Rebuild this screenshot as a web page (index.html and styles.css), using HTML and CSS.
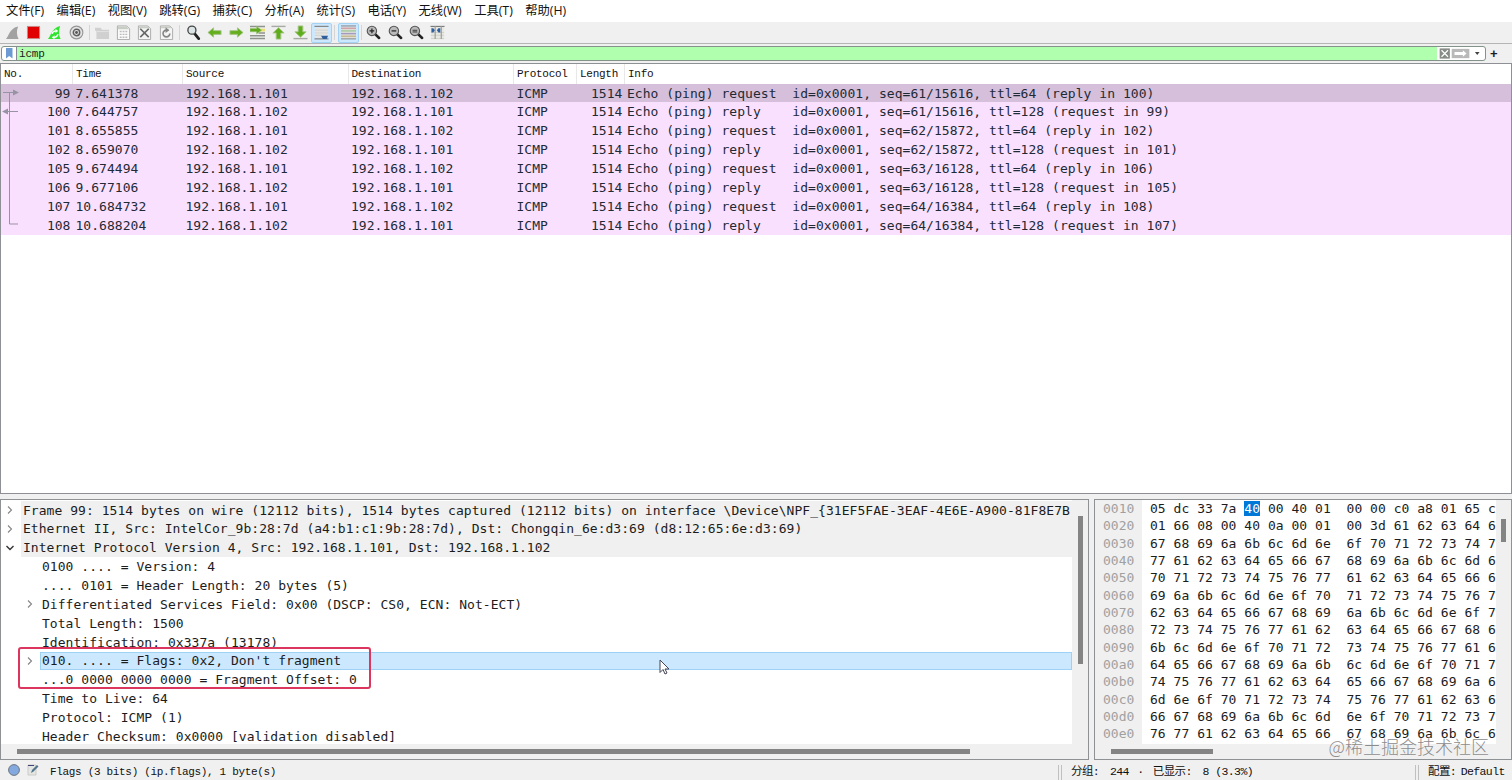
FILE: index.html
```html
<!DOCTYPE html>
<html lang="zh-CN">
<head>
<meta charset="utf-8">
<title>Wireshark</title>
<link rel="stylesheet" href="styles.css">
</head>
<body>
<div class="app">
<nav class="menu"><span>文件(F)</span><span>编辑(E)</span><span>视图(V)</span><span>跳转(G)</span><span>捕获(C)</span><span>分析(A)</span><span>统计(S)</span><span>电话(Y)</span><span>无线(W)</span><span>工具(T)</span><span>帮助(H)</span></nav>
<div class="toolbar">
<span class="tool"><svg viewBox="0 0 16 16"><path d="M1 15C4 12 5 3 14 1.500C12 6 12.500 11 14.500 15Z" fill="#a2a2a2"/></svg></span>
<span class="tool"><svg viewBox="0 0 16 16"><rect x="1.500" y="1.500" width="13" height="13" fill="#e00000" stroke="#c98b8b"/></svg></span>
<span class="tool"><svg viewBox="0 0 16 16"><path d="M1 15C4 12 5 3 14 1C12 6 12.500 11 14.500 15Z" fill="#2ee52e"/><path d="M5.500 9.500a3.500 3.500 0 0 1 4-3M11.500 9.500a3.500 3.500 0 0 1-4 3.500" fill="none" stroke="#f5fff5" stroke-width="1.600"/><path d="M9 4l3 2.500-3 2zM8 15.500l-3-2.500 3-2z" fill="#f5fff5"/></svg></span>
<span class="tool"><svg viewBox="0 0 16 16"><circle cx="8" cy="8" r="6.800" fill="#e4e4e4" stroke="#969696" stroke-width="1.200"/><circle cx="8" cy="8" r="3.400" fill="none" stroke="#606060" stroke-width="1.600"/><circle cx="8" cy="8" r="1.500" fill="#555"/></svg></span>
<i class="sep s1"></i>
<span class="tool"><svg viewBox="0 0 16 16"><path d="M0 3h6l1.500 2H15v10H1.500V6H0Z" fill="#d0d0d0"/><path d="M2 7h13" stroke="#e2e2e2"/></svg></span>
<span class="tool"><svg viewBox="0 0 16 16"><path d="M1.500 1h10l3 3v11.500h-13Z" fill="#fafafa" stroke="#aaa"/><path d="M2 1.500h9l3 3H2Z" fill="#c8cec4"/><path d="M4 7h8.500M4 10h8.500M4 13h8.500" stroke="#bbb" stroke-width="1.500" stroke-dasharray="2 1"/></svg></span>
<span class="tool"><svg viewBox="0 0 16 16"><path d="M1.500 1h10l3 3v11.500h-13Z" fill="#f5f5f5" stroke="#aaa"/><path d="M2 1.500h9l3 2H2Z" fill="#c8cec4"/><path d="M3.500 4l9 9M12.500 4l-9 9" stroke="#686868" stroke-width="1.800"/></svg></span>
<span class="tool"><svg viewBox="0 0 16 16"><path d="M1.500 1h10l3 3v11.500h-13Z" fill="#f5f5f5" stroke="#aaa"/><path d="M2 1.500h9l3 2H2Z" fill="#c8cec4"/><path d="M10 5.500H8A3.600 3.600 0 1 0 11.500 9" fill="none" stroke="#858585" stroke-width="1.700"/><path d="M7 2.500l4 3-4 3z" fill="#858585"/></svg></span>
<i class="sep s2"></i>
<span class="tool"><svg viewBox="0 0 16 16"><path d="M9 9l4.500 5.500" stroke="#222" stroke-width="3" stroke-linecap="round"/><circle cx="6.300" cy="5.500" r="4.300" fill="#dce5e5" stroke="#444" stroke-width="1.400"/></svg></span>
<span class="tool"><svg viewBox="0 0 16 16"><path d="M1 8l6-5v3h8v4H7v3Z" fill="#65ae1d" stroke="#a5c58a"/></svg></span>
<span class="tool"><svg viewBox="0 0 16 16"><path d="M15 8L9 3v3H1v4h8v3Z" fill="#65ae1d" stroke="#a5c58a"/></svg></span>
<span class="tool"><svg viewBox="0 0 16 16"><path d="M0 1.500h16M0 11.500h16M0 14.500h16M9 8.500h7" stroke="#8e938b" stroke-width="1.600"/><path d="M9 5.500h7" stroke="#e8df79" stroke-width="3"/><path d="M12.500 5.500L7 1.500v2.300H0v3.400h7v2.300Z" fill="#5fa91c" stroke="#a0c77e" stroke-width=".7"/></svg></span>
<span class="tool"><svg viewBox="0 0 16 16"><path d="M.5 1.500h15" stroke="#a8aba5" stroke-width="1.500"/><path d="M8 2.800l6 5.700h-3.500v6.500h-5V8.500H2Z" fill="#60ad1b" stroke="#a5c58a"/></svg></span>
<span class="tool"><svg viewBox="0 0 16 16"><path d="M.5 14.500h15" stroke="#a8aba5" stroke-width="1.500"/><path d="M8 13l6-5.700h-3.500V1h-5v6.300H2Z" fill="#60ad1b" stroke="#a5c58a"/></svg></span>
<span class="tool on"><svg viewBox="0 0 16 16"><path d="M.5 1.500h15M.5 14.800h15" stroke="#888" stroke-width="1.200"/><path d="M1 3h14v10.500H1Z" fill="#e6e6e2"/><path d="M1 5.500h14M1 8.500h14M1 11h7" stroke="#cfd2cf"/><path d="M7.500 11.500H15L13.500 15h-4Z" fill="#305f9d"/></svg></span>
<i class="sep"></i>
<span class="tool on"><svg viewBox="0 0 16 16"><path d="M0 2h16v12.500H0Z" fill="#deded9"/><path d="M0 1h16M0 14.800h16" stroke="#808080"/><path d="M0 3.500h16" stroke="#cfa1aa" stroke-width="1.500"/><path d="M0 6.300h16" stroke="#a3c79f" stroke-width="1.500"/><path d="M0 9.200h16" stroke="#a29ac0" stroke-width="1.500"/><path d="M0 12h16" stroke="#c6b78f" stroke-width="1.500"/></svg></span>
<i class="sep s3"></i>
<span class="tool"><svg viewBox="0 0 16 16"><path d="M10 10l4 3.800" stroke="#222" stroke-width="2.800" stroke-linecap="round"/><circle cx="6.300" cy="6.300" r="5" fill="#bababa" stroke="#555" stroke-width="1.200"/><path d="M3.800 6.300h5M6.300 3.800v5" stroke="#222" stroke-width="1.300"/></svg></span>
<span class="tool"><svg viewBox="0 0 16 16"><path d="M10 10l4 3.800" stroke="#222" stroke-width="2.800" stroke-linecap="round"/><circle cx="6.300" cy="6.300" r="5" fill="#bababa" stroke="#555" stroke-width="1.200"/><path d="M3.800 6.300h5" stroke="#222" stroke-width="1.300"/></svg></span>
<span class="tool"><svg viewBox="0 0 16 16"><path d="M10 10l4 3.800" stroke="#222" stroke-width="2.800" stroke-linecap="round"/><circle cx="6.300" cy="6.300" r="5" fill="#bababa" stroke="#555" stroke-width="1.200"/><path d="M3.800 5.600h5M3.800 7.400h5" stroke="#333"/></svg></span>
<span class="tool"><svg viewBox="0 0 16 16"><path d="M1 2h14v13H1Z" fill="#e8e8e3"/><path d="M.5 1.500h15" stroke="#777" stroke-width="1.200"/><path d="M1 14.500h14M1 8h14M1 11h14" stroke="#d0d0ca"/><path d="M5.500 1v14M12 1v14" stroke="#999" stroke-width="1.200"/><path d="M1.500 3.500h2l1.700 2.200L3.500 8h-2zM11 3.500H9L7.300 5.700 9 8h2z" fill="#305f9d"/></svg></span>
</div>
<div class="filter">
<div class="field"><svg class="mark" viewBox="0 0 14 13"><path d="M4 1h6.500v10.500L7.200 9 4 11.500Z" fill="#6b9bd2"/></svg><div class="query">icmp</div>
<svg class="actions" viewBox="0 0 48 14"><rect x="1" y="1.500" width="11" height="11" fill="#868b86"/><path d="M3 3.500l7 7M10 3.500l-7 7" stroke="#fff" stroke-width="1.300"/><rect x="14" y="2" width="19" height="10" fill="#b9b9b9"/><path d="M17 5.500h9V3.500L30 7l-4 3.500v-2h-9Z" fill="#fff"/><path d="M39 5.500h5L41.500 8.500Z" fill="#444"/></svg></div><b>+</b>
</div>
<main class="packets">
<div class="row head"><span>No.</span><span>Time</span><span>Source</span><span>Destination</span><span>Protocol</span><span>Length</span><span>Info</span></div>
<div class="row sel"><span>99</span><span>7.641378</span><span>192.168.1.101</span><span>192.168.1.102</span><span>ICMP</span><span>1514</span><span>Echo (ping) request  id=0x0001, seq=61/15616, ttl=64 (reply in 100)</span></div>
<div class="row"><span>100</span><span>7.644757</span><span>192.168.1.102</span><span>192.168.1.101</span><span>ICMP</span><span>1514</span><span>Echo (ping) reply    id=0x0001, seq=61/15616, ttl=128 (request in 99)</span></div>
<div class="row"><span>101</span><span>8.655855</span><span>192.168.1.101</span><span>192.168.1.102</span><span>ICMP</span><span>1514</span><span>Echo (ping) request  id=0x0001, seq=62/15872, ttl=64 (reply in 102)</span></div>
<div class="row"><span>102</span><span>8.659070</span><span>192.168.1.102</span><span>192.168.1.101</span><span>ICMP</span><span>1514</span><span>Echo (ping) reply    id=0x0001, seq=62/15872, ttl=128 (request in 101)</span></div>
<div class="row"><span>105</span><span>9.674494</span><span>192.168.1.101</span><span>192.168.1.102</span><span>ICMP</span><span>1514</span><span>Echo (ping) request  id=0x0001, seq=63/16128, ttl=64 (reply in 106)</span></div>
<div class="row"><span>106</span><span>9.677106</span><span>192.168.1.102</span><span>192.168.1.101</span><span>ICMP</span><span>1514</span><span>Echo (ping) reply    id=0x0001, seq=63/16128, ttl=128 (request in 105)</span></div>
<div class="row"><span>107</span><span>10.684732</span><span>192.168.1.101</span><span>192.168.1.102</span><span>ICMP</span><span>1514</span><span>Echo (ping) request  id=0x0001, seq=64/16384, ttl=64 (reply in 108)</span></div>
<div class="row"><span>108</span><span>10.688204</span><span>192.168.1.102</span><span>192.168.1.101</span><span>ICMP</span><span>1514</span><span>Echo (ping) reply    id=0x0001, seq=64/16384, ttl=128 (request in 107)</span></div>
<svg class="link" viewBox="0 0 20 152"><path d="M2 10.500h13M8.500 10.500v131.500H17M6 29.500h11" fill="none" stroke="#9693a3"/><path d="M12 7.500l6 3-6 3zM7 26.500l-6 3 6 3z" fill="#9693a3"/></svg>
</main>
<div class="lower">
<section class="details">
<div class="tree">
<div class="line top"><svg viewBox="0 0 8 8"><path d="M2 .5L5.500 4 2 7.500"/></svg><span>Frame 99: 1514 bytes on wire (12112 bits), 1514 bytes captured (12112 bits) on interface \Device\NPF_{31EF5FAE-3EAF-4E6E-A900-81F8E7B</span></div>
<div class="line top"><svg viewBox="0 0 8 8"><path d="M2 .5L5.500 4 2 7.500"/></svg><span>Ethernet II, Src: IntelCor_9b:28:7d (a4:b1:c1:9b:28:7d), Dst: Chongqin_6e:d3:69 (d8:12:65:6e:d3:69)</span></div>
<div class="line top"><svg class="open" viewBox="0 0 8 8"><path d="M.5 2L4 5.500 7.500 2"/></svg><span>Internet Protocol Version 4, Src: 192.168.1.101, Dst: 192.168.1.102</span></div>
<div class="line sub"><span>0100 .... = Version: 4</span></div>
<div class="line sub"><span>.... 0101 = Header Length: 20 bytes (5)</span></div>
<div class="line sub"><svg viewBox="0 0 8 8"><path d="M2 .5L5.500 4 2 7.500"/></svg><span>Differentiated Services Field: 0x00 (DSCP: CS0, ECN: Not-ECT)</span></div>
<div class="line sub"><span>Total Length: 1500</span></div>
<div class="line sub"><span>Identification: 0x337a (13178)</span></div>
<div class="line sub current"><svg viewBox="0 0 8 8"><path d="M2 .5L5.500 4 2 7.500"/></svg><span>010. .... = Flags: 0x2, Don't fragment</span></div>
<div class="line sub"><span>...0 0000 0000 0000 = Fragment Offset: 0</span></div>
<div class="line sub"><span>Time to Live: 64</span></div>
<div class="line sub"><span>Protocol: ICMP (1)</span></div>
<div class="line sub"><span>Header Checksum: 0x0000 [validation disabled]</span></div>
</div>
<div class="vbar"><i></i></div><div class="hbar"><i></i></div>
<div class="frame"></div>
<svg class="cursor" viewBox="0 0 12 16"><path d="M2 1v12.500l3-3 2 4.500 2-1-2-4h4Z" fill="#fff" stroke="#445" stroke-width="1"/></svg>
</section>
<section class="bytes">
<pre class="offset">0010
0020
0030
0040
0050
0060
0070
0080
0090
00a0
00b0
00c0
00d0
00e0</pre>
<pre class="hex">05 dc 33 7a <mark>40</mark> 00 40 01  00 00 c0 a8 01 65 c
01 66 08 00 40 0a 00 01  00 3d 61 62 63 64 6
67 68 69 6a 6b 6c 6d 6e  6f 70 71 72 73 74 7
77 61 62 63 64 65 66 67  68 69 6a 6b 6c 6d 6
70 71 72 73 74 75 76 77  61 62 63 64 65 66 6
69 6a 6b 6c 6d 6e 6f 70  71 72 73 74 75 76 7
62 63 64 65 66 67 68 69  6a 6b 6c 6d 6e 6f 7
72 73 74 75 76 77 61 62  63 64 65 66 67 68 6
6b 6c 6d 6e 6f 70 71 72  73 74 75 76 77 61 6
64 65 66 67 68 69 6a 6b  6c 6d 6e 6f 70 71 7
74 75 76 77 61 62 63 64  65 66 67 68 69 6a 6
6d 6e 6f 70 71 72 73 74  75 76 77 61 62 63 6
66 67 68 69 6a 6b 6c 6d  6e 6f 70 71 72 73 7
76 77 61 62 63 64 65 66  67 68 69 6a 6b 6c 6</pre>
<div class="vbar"><i></i></div><div class="hbar"><i></i></div>
</section>
</div>
<footer class="status">
<svg class="dot" viewBox="0 0 12 12"><circle cx="6" cy="6" r="5.400" fill="#84a9df" stroke="#6b7480"/></svg>
<svg class="note" viewBox="0 0 12 12"><path d="M1 1h8v10H1Z" fill="#e3e6e2" stroke="#c9ccc7"/><path d="M1 1.500h6" stroke="#447"/><path d="M4 9l1-3 5-5 1.500 1.500-5 5Z" fill="#52758a"/></svg>
<span class="info">Flags (3 bits) (ip.flags), 1 byte(s)</span>
<i class="grip"></i><span class="count">分组<em>:</em> 244 <u>·</u> 已显示<em>:</em> 8 (3.3%)</span>
<i class="grip"></i><span class="profile">配置<em>:</em>Default</span>
</footer>
<div class="watermark">@稀土掘金技术社区</div>
</div>
</body>
</html>
```
FILE: styles.css
```css
* { box-sizing: border-box; }
body { margin: 0; }
.app {
  position: relative;
  width: 1512px;
  height: 780px;
  overflow: hidden;
  display: flex;
  flex-direction: column;
  background: #f0f0f0;
  color: #1c1c1c;
  font: 13px/18.88px "DejaVu Sans Mono", monospace;
  letter-spacing: 0.045px;
}
.menu {
  flex: 0 0 22px;
  display: flex;
  gap: 12.4px;
  padding-left: 6px;
  background: #fff;
  font: 12.3px/22px "Open Sans", "Noto Sans CJK SC", sans-serif;
  letter-spacing: 0;
  color: #111;
}
.toolbar {
  flex: 0 0 22px;
  display: flex;
  align-items: center;
  padding-left: 1.7px;
  border-bottom: 1px solid #b4b4b4;
}
.tool {
  flex: 0 0 21.3px;
  height: 20px;
  display: flex;
  align-items: center;
  justify-content: center;
}
.tool svg { width: 15px; height: 15px; }
.tool.on { background: #cce8ff; border: 1px solid #a2d3f7; border-radius: 2px; }
.sep { flex: 0 0 5.5px; height: 15px; border-left: 1px solid #d5d5d5; transform: translateX(2px); }
.s1 { flex-basis: 4.7px; }
.s2 { flex-basis: 6.2px; }
.s3 { flex-basis: 4.5px; }
.filter { flex: 0 0 19px; display: flex; align-items: center; padding-left: 1px; }
.field {
  width: 1485px;
  height: 15px;
  display: flex;
  border: 1px solid #83938a;
  border-radius: 3px;
  background: #fff;
  overflow: hidden;
}
.mark { width: 14px; height: 13px; }
.query {
  flex: 1;
  border-left: 1px solid #889;
  background: #afffaf;
  padding-left: 2px;
  font: 11px/14px "Liberation Mono", monospace;
  letter-spacing: -0.2px;
}
.actions { width: 48px; height: 13px; }
.filter b { margin-left: 4px; font: bold 13px/14px "Liberation Sans", sans-serif; }
.packets {
  position: relative;
  flex: 0 0 431px;
  border: 1px solid #8f9096;
  background: #fff;
}
.row {
  height: 18.88px;
  display: grid;
  grid-template-columns: 72px 110px 165.5px 165.5px 63px 48px 1fr;
  background: #fae0ff;
  color: #1e2a35;
  white-space: pre;
}
.row span { padding: 0 0 0 2.5px; line-height: 19.5px; }
.row span:nth-child(1), .row span:nth-child(6) { text-align: right; padding: 0 2.5px 0 0; }
.row span:nth-child(7) { padding-left: 2px; }
.row.sel { background: #d6bfdb; }
.row.head {
  height: 19.5px;
  background: #fff;
  color: #111;
  font: 11px/19px "Liberation Mono", monospace;
  letter-spacing: -0.27px;
}
.row.head span, .row.head span:nth-child(1), .row.head span:nth-child(6) {
  text-align: left;
  line-height: 19px;
  padding: 1px 0 0 3px;
  border-right: 1px solid #e8e8e8;
}
.row.head span:last-child { border: 0; }
.link { position: absolute; left: 0; top: 18px; width: 20px; height: 152px; }
.lower {
  flex: 0 0 261px;
  margin-top: 5px;
  display: grid;
  grid-template-columns: 1089px 418px;
  gap: 5px;
}
.details, .bytes { position: relative; display: grid; border: 1px solid #8f9294; overflow: hidden; }
.details { grid-template: 244px 1fr / 1071px 1fr; }
.tree { background: #fff; overflow: hidden; padding-top: 0.5px; }
.line { display: flex; height: 18.88px; align-items: center; white-space: pre; }
.line svg { flex: 0 0 8px; width: 8px; height: 8px; fill: none; stroke: #858585; stroke-width: 1.1; }
.line svg.open { stroke: #333; stroke-width: 1.4; }
.line span { flex: 1; height: 100%; padding-left: 2px; line-height: 19.4px; }
.top { padding-left: 5px; }
.top svg { margin-right: 7px; }
.top span { background: #f0f0f0; }
.sub { padding-left: 39px; }
.sub svg { margin: 0 6px 0 -14px; }
.line.current span { background: #cce8ff; border: 1px solid #9ed2f5; line-height: 16.4px; padding-left: 1px; }
.vbar, .hbar { background: #f0f0f0; }
.hbar { grid-column: 1 / -1; }
.vbar i, .hbar i { display: block; background: #848484; }
.details .vbar i { width: 5px; height: 148px; margin: 16px 0 0 6px; }
.details .hbar i { width: 953px; height: 5px; margin: 5px 0 0 16px; }
.bytes { grid-template: 244px 1fr / 47px 354px 1fr; }
.bytes pre { margin: 0; font: inherit; line-height: 17.33px; overflow: hidden; padding-left: 8px; letter-spacing: 0.033px; }
.bytes .offset { background: #f0f0f0; color: #a0a0a0; }
.bytes .hex { background: #fff; }
.hex mark { background: #0078d7; color: #fff; }
.bytes .vbar i { width: 5px; height: 23px; margin: 19px 0 0 5px; }
.bytes .hbar i { width: 102px; height: 5px; margin: 5px 0 0 16px; }
.frame {
  position: absolute;
  left: 17px;
  top: 147px;
  width: 353px;
  height: 42px;
  border: 2px solid #dc365f;
  border-radius: 3px;
}
.cursor { position: absolute; left: 657px; top: 159px; width: 12px; height: 16px; }
.status {
  flex: 1;
  display: flex;
  align-items: center;
  padding: 3px 0 0 8px;
  font: 11px/18px "Liberation Mono", "Noto Sans CJK SC", monospace;
  letter-spacing: -0.32px;
  white-space: pre;
  color: #111;
}
.dot, .note { flex: none; width: 12px; height: 12px; margin: 0 7px 4px 0; }
.info { flex: 0 0 1008px; margin-left: 4px; }
.count { flex: 0 0 344px; }
.count, .profile { font-size: 11.5px; letter-spacing: -0.6px; }
.status em { font-style: normal; margin-right: 4.5px; }
.status u { text-decoration: none; margin: 0 3px 0 2px; }
.grip { width: 4px; height: 15px; margin-right: 9px; border: solid #c0c0c0; border-width: 0 1px; flex: none; }
.watermark {
  position: absolute;
  right: 23px;
  top: 734px;
  font: 300 18px/25px "Noto Sans CJK SC", sans-serif;
  letter-spacing: 0;
  color: #8c8c8c;
  text-shadow: 0 0 1px #fff;
}
```
